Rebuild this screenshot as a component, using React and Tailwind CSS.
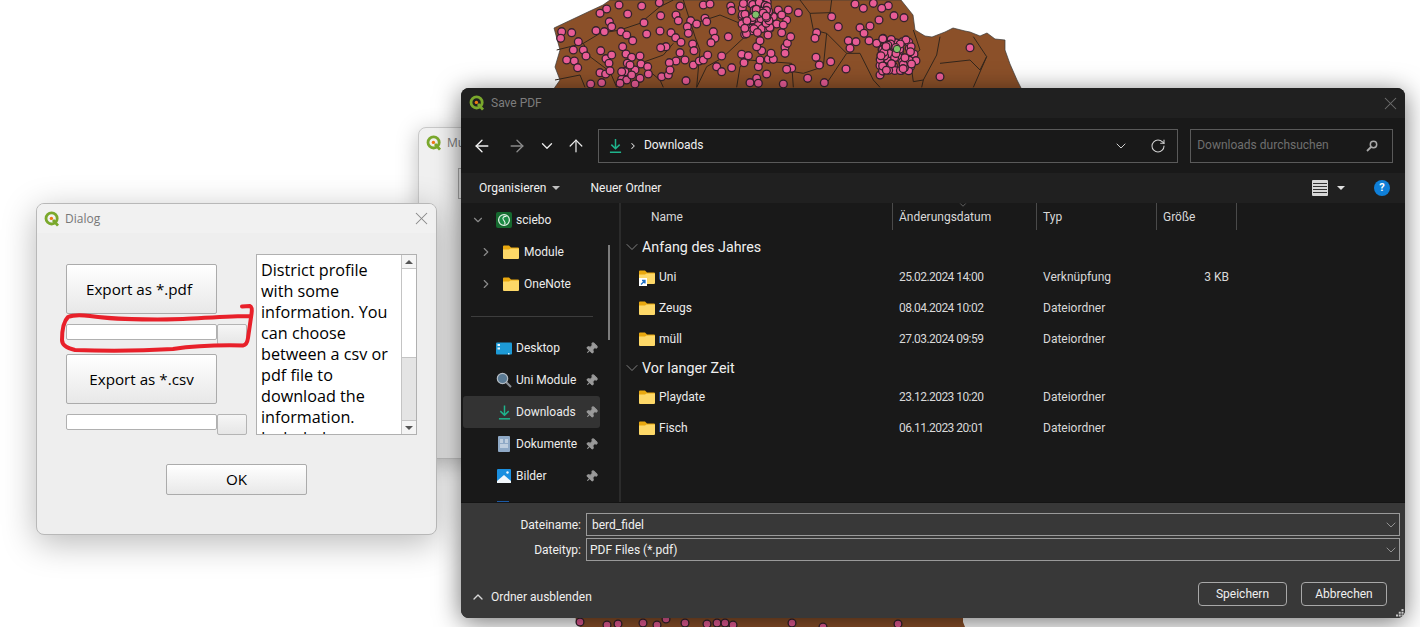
import React from "react";
import { ArrowLeft, ArrowRight, ArrowUp, ChevronDown, ChevronRight, ChevronUp, RotateCw, X, Pin } from "lucide-react";

const brownDots = [
  [65,95],[95,98],[62,115],[115,125],[100,150],[130,150],[138,168],[80,180],[103,183],[113,203],[182,152],[198,176],[207,190],[215,165],[180,218],[197,222],[210,212],[152,252],[185,248],[168,92],[193,95],[243,95],[260,105],[278,122],[248,140],[258,162],[275,172],[300,168],[303,192],[285,210],[323,200],[325,222],[300,235],[285,252],[245,238],[255,215],[262,190],[320,102],[360,93],[312,68],[263,42],[237,15],[200,27],[180,40],[208,65],[215,80],[362,47],[408,45],[415,62],[452,62],[470,72],[442,80],[445,100],[393,98],[407,113],[423,127],[378,140],[362,143],[458,132],[462,152],[420,158],[435,180],[408,183],[388,188],[365,230],[385,225],[390,210],[438,242],[460,195],[478,183],[490,180],[503,165],[545,168],[530,200],[545,215],[575,203],[612,188],[605,163],[625,167],[565,110],[520,95],[525,115],[513,128],[495,55],[500,65],[490,15],[510,12],[572,18],[575,32],[358,8],[305,18],[420,18],[655,200],[660,180],[685,178],[700,178],[693,160],[665,152],[650,140],[660,122],[680,222],[650,235],[630,248],[655,250],[730,252],[755,205],[740,208],[735,142],[735,160],[742,130],[752,110],[725,98],[830,98],[825,115],[828,172],[838,195],[872,185],[803,235],[853,248],[875,50],[895,80],[918,207],[925,122],[948,125],[930,145],[960,83],[990,78],[972,100],[987,122],[1010,130],[1017,60],[1062,47],[1092,53],[1045,17],[1025,25],[1000,10],[970,25],[945,12],[1290,143],[1200,230],[1122,162],[1128,182],[1020,225],[775,38],[745,30],[715,30],[710,72],[740,60],[270,195],[245,215],[260,240],[240,250],[275,225],[730,75],[700,50],[725,45],
];

const lines = [
  "130,130 180,100 240,90 300,70 360,20 400,0",
  "430,0 465,110 480,150 470,262",
  "465,70 540,45 600,70",
  "615,110 545,175 500,200 470,262",
  "300,190 370,165 400,130",
  "50,150 130,130 150,170 210,215",
  "45,240 120,225 135,262",
  "210,215 230,262",
  "300,190 360,240 370,262",
  "780,0 810,40 870,38 875,0",
  "810,40 820,90 860,100 920,160 860,250",
  "920,160 960,160 1000,240 1020,262",
  "860,100 850,200 790,220 760,215",
  "625,180 755,190 760,262",
  "630,180 600,200 590,262",
  "1120,90 1140,150 1110,175 1120,245 1150,240 1190,165 1200,110",
  "1200,190 1290,180 1320,210 1340,170 1300,110",
  "1340,170 1300,262",
  "1150,240 1145,262",
];

const bottomDots = [[580,622],[607,625],[618,624],[643,623],[657,625],[666,619],[685,623],[707,624],[717,623],[725,623],[733,625],[792,623],[823,627],[898,624]];

// small seeded generator so the dense clusters stay the same on every load
function cluster(seed, cx, cy, rx, ry, count) {
  let s = seed;
  const next = () => {
    s = (s * 16807) % 2147483647;
    return s / 2147483647;
  };
  return Array.from({ length: count }, () => [cx + (next() * 2 - 1) * rx, cy + (next() * 2 - 1) * ry]);
}

const clusterA = cluster(11, 648, 55, 42, 50, 60);
const clusterB = cluster(29, 1068, 165, 48, 50, 70);

function MapLayer() {
  const z = ([x, y]) => [540 + x / 3, y / 3];
  const all = [...brownDots, ...clusterA, ...clusterB].map(z);
  return (
    <svg className="absolute left-0 top-0" width="1420" height="627" viewBox="0 0 1420 627">
      <polygon
        fill="#8b5029"
        stroke="#3a3a3a"
        strokeWidth="0.7"
        points="554,28 590,11 603,5 610,0 901,0 913,15 915,30 925,36 932,37 945,32 953,28 965,31 970,32 980,36 987,33 995,39 1005,40 1005,50 1010,64 1017,80 1022,90 553,90 560,80 555,67 560,50"
      />
      {lines.map((l) => (
        <polyline
          key={l}
          fill="none"
          stroke="#33261c"
          strokeWidth="1"
          points={l
            .split(" ")
            .map((p) => {
              const [x, y] = p.split(",").map(Number);
              return `${540 + x / 3},${y / 3}`;
            })
            .join(" ")}
        />
      ))}
      {all.map(([x, y], i) => (
        <circle key={i} cx={x} cy={y} r="3.9" fill="#e85c96" stroke="#33222b" strokeWidth="1.3" />
      ))}
      <circle cx="755.7" cy="14.7" r="3.7" fill="#7fc06a" stroke="#33222b" />
      <circle cx="897" cy="49" r="3.7" fill="#7fc06a" stroke="#33222b" />
      <polygon fill="#8b5029" points="575,612 963,612 963,622 965,627 580,627 576,622" />
      {bottomDots.map(([x, y], i) => (
        <circle key={i} cx={x} cy={y} r="3.9" fill="#e85c96" stroke="#33222b" strokeWidth="1.3" />
      ))}
    </svg>
  );
}

function QgisIcon({ className }) {
  return (
    <svg className={className} viewBox="0 0 16 16">
      <circle cx="7.6" cy="7.4" r="5.6" fill="none" stroke="#7aa82c" strokeWidth="2.8" />
      <path d="M9 9l5 5.6" stroke="#7aa82c" strokeWidth="2.8" />
      <circle cx="7.4" cy="7.4" r="1.7" fill="#ee7913" />
    </svg>
  );
}

function Folder({ className = "w-4 h-[14px]" }) {
  return (
    <svg className={className} viewBox="0 0 16 14">
      <path d="M0 1.5a1 1 0 0 1 1-1h5l2 2h7a1 1 0 0 1 1 1V6H0z" fill="#e9a80f" />
      <path d="M0 4.5h6l1.5-1H16V13a1 1 0 0 1-1 1H1a1 1 0 0 1-1-1z" fill="#fdd868" />
    </svg>
  );
}

function ShortcutFolder() {
  return (
    <div className="relative">
      <Folder />
      <svg className="absolute left-0 top-[8px] w-[8px] h-[8px]" viewBox="0 0 8 8">
        <rect width="8" height="8" fill="#ffffff" />
        <path d="M2 6.5L5.5 3M3 2.5h3v3" fill="none" stroke="#1f6fc4" strokeWidth="1.3" />
      </svg>
    </div>
  );
}

function DownloadIcon({ className }) {
  return (
    <svg className={className} viewBox="0 0 14 16">
      <path d="M7 0.5v10M2.5 6.5L7 11l4.5-4.5" fill="none" stroke="#1fb48c" strokeWidth="1.6" />
      <path d="M1 14.8h12" stroke="#1fb48c" strokeWidth="1.6" />
    </svg>
  );
}

function ScieboIcon() {
  return (
    <svg className="w-4 h-4" viewBox="0 0 16 16">
      <rect width="16" height="16" rx="2" fill="#15692f" />
      <circle cx="8" cy="8" r="5.4" fill="#1c8a45" stroke="#e4f2e8" strokeWidth="1.2" />
      <path d="M10.5 4.5C7.5 4 6 6 7.5 8s2.5 2.5 1 4.5" fill="none" stroke="#e4f2e8" strokeWidth="1.1" />
    </svg>
  );
}

function DesktopIcon() {
  return (
    <svg className="w-4 h-[13px]" viewBox="0 0 16 13">
      <rect width="16" height="12" y="0.5" rx="1" fill="#1d9ad6" />
      <rect x="1.5" y="2" width="2.5" height="2" fill="#e8f6fc" />
      <rect x="1.5" y="5.5" width="2.5" height="2" fill="#e8f6fc" />
      <rect x="12" y="11" width="1.5" height="1.5" fill="#cceeff" />
    </svg>
  );
}

function LensIcon() {
  return (
    <svg className="w-4 h-4" viewBox="0 0 16 16">
      <path d="M9.5 9.5L15 15" stroke="#8a8f96" strokeWidth="2" />
      <circle cx="6.5" cy="6.5" r="5.2" fill="#5a7a94" stroke="#b4bcc4" strokeWidth="1.2" />
    </svg>
  );
}

function DocIcon() {
  return (
    <svg className="w-4 h-4" viewBox="0 0 16 16">
      <rect x="2" y="0" width="12" height="16" rx="1" fill="#8fa9c6" />
      <path d="M4 4h3M4 6h3M9 4h3M9 6h3M4 9h8M4 11h8" stroke="#eef3f8" strokeWidth="1" />
    </svg>
  );
}

function PictureIcon() {
  return (
    <svg className="w-4 h-4" viewBox="0 0 16 16">
      <rect x="1" y="1" width="14" height="14" rx="1" fill="#1a8fe0" />
      <path d="M1 13l7-6 7 6v2H1z" fill="#f2f7fb" />
      <circle cx="11.5" cy="4.5" r="1.2" fill="#f2f7fb" />
    </svg>
  );
}

function PinMark() {
  return <Pin className="w-[13px] h-[13px] text-[#9a9a9a] fill-[#9a9a9a] rotate-45" strokeWidth={2} />;
}

function Tri({ className }) {
  return <div className={`w-0 h-0 border-x-[4px] border-x-transparent border-t-[4px] ${className}`}></div>;
}

function TreeRow({ chevron, icon, label, pinned, selected, indent }) {
  return (
    <div className={`w-[137px] h-8 flex items-center mx-[2px] rounded-[3px] ${selected ? "bg-[#333333]" : ""}`}>
      <div className={`flex items-center shrink-0 ${indent ? "w-[40px] pl-[16px]" : "w-[33px] pl-[8px]"}`}>
        {chevron === "down" && <ChevronDown className="w-[14px] h-[14px] text-[#8a8a8a]" strokeWidth={2} />}
        {chevron === "right" && <ChevronRight className="w-[14px] h-[14px] text-[#8a8a8a]" strokeWidth={2} />}
      </div>
      <div className="w-[16px] shrink-0 flex justify-center">{icon}</div>
      <span className={`${indent ? "ml-[5px]" : "ml-[4px]"} text-[12px] text-[#ececec]`}>{label}</span>
      {pinned && (
        <div className="ml-auto mr-[1px] w-[14px]">
          <PinMark />
        </div>
      )}
    </div>
  );
}

function Sidebar() {
  return (
    <div className="relative w-[158px] shrink-0 overflow-hidden pt-px">
      <TreeRow chevron="down" icon={<ScieboIcon />} label="sciebo" />
      <TreeRow chevron="right" indent icon={<Folder />} label="Module" />
      <TreeRow chevron="right" indent icon={<Folder />} label="OneNote" />
      <div className="h-8 flex items-center pl-[10px] pr-[26px]">
        <div className="h-px w-full bg-[#3d3d3d]"></div>
      </div>
      <TreeRow icon={<DesktopIcon />} label="Desktop" pinned />
      <TreeRow icon={<LensIcon />} label="Uni Module" pinned />
      <TreeRow icon={<DownloadIcon className="w-[13px] h-[15px]" />} label="Downloads" pinned selected />
      <TreeRow icon={<DocIcon />} label="Dokumente" pinned />
      <TreeRow icon={<PictureIcon />} label="Bilder" pinned />
      <div className="pl-[36px] pt-[9px]">
        <div className="w-[12px] h-[12px] bg-[#1c5aa6]"></div>
      </div>
      <div className="absolute left-[147px] top-[42px] w-[2px] h-[95px] bg-[#7c7c7c]"></div>
    </div>
  );
}

function GroupHead({ label, h }) {
  return (
    <div className={`${h} flex items-center pl-[1px]`}>
      <ChevronDown className="w-[20px] h-[20px] text-[#8a8a8a]" strokeWidth={1.1} />
      <span className="text-[14.3px] text-[#f0f0f0] pt-[2px]">{label}</span>
    </div>
  );
}

function FileRow({ name, date, type, size, shortcut }) {
  return (
    <div className="h-[31px] flex items-center text-[12px] text-[#d8d8d8]">
      <div className="w-[278px] shrink-0 flex items-center pl-[18px] gap-[4px] text-[#ececec]">
        {shortcut ? <ShortcutFolder /> : <Folder />}
        <span>{name}</span>
      </div>
      <div className="w-[144px] shrink-0 tracking-[-0.55px]">{date}</div>
      <div className="w-[100px] shrink-0">{type}</div>
      <div className="w-[86px] shrink-0 text-right">{size}</div>
    </div>
  );
}

function SaveDialog() {
  return (
    <div className="absolute left-[461px] top-[88px] w-[944px] h-[530px] rounded-lg overflow-hidden flex flex-col bg-[#191919] shadow-[0_4px_26px_rgba(0,0,0,0.55)] font-[Roboto,sans-serif]">
      <div className="h-[30px] shrink-0 bg-[#202020] flex items-center pl-[8px] pr-[4px]">
        <QgisIcon className="w-4 h-4" />
        <span className="ml-[6px] text-[12px] text-[#7d7d7d]">Save PDF</span>
        <X className="ml-auto w-[21px] h-[21px] text-[#6e6e6e]" strokeWidth={1.2} />
      </div>

      <div className="h-[55px] shrink-0 bg-[#191919] flex items-center pl-[11px] pr-[12px]">
        <ArrowLeft className="w-5 h-5 text-[#f0f0f0]" strokeWidth={1.6} />
        <ArrowRight className="ml-[15px] w-5 h-5 text-[#8a8a8a]" strokeWidth={1.6} />
        <ChevronDown className="ml-[11px] w-[18px] h-[18px] text-[#e8e8e8]" strokeWidth={1.8} />
        <ArrowUp className="ml-[10px] w-5 h-5 text-[#e8e8e8]" strokeWidth={1.5} />
        <div className="ml-[12px] w-[581px] h-[34px] border border-[#5a5a5a] flex items-center pl-[10px] pr-[11px]">
          <DownloadIcon className="w-[13px] h-[16px]" />
          <ChevronRight className="ml-[6px] w-[10px] h-[10px] text-[#e0e0e0]" strokeWidth={2.5} />
          <span className="ml-[6px] text-[12px] text-[#f0f0f0] pb-px">Downloads</span>
          <ChevronDown className="ml-auto w-4 h-4 text-[#d0d0d0]" strokeWidth={1.5} />
          <RotateCw className="ml-[21px] w-4 h-4 text-[#d0d0d0]" strokeWidth={1.6} />
        </div>
        <div className="ml-[12px] w-[203px] h-[34px] border border-[#5a5a5a] flex items-center pl-[6px] pr-[14px]">
          <span className="text-[12px] text-[#6f6f6f] pb-px">Downloads durchsuchen</span>
          <svg className="ml-auto w-3 h-3" viewBox="0 0 12 12">
            <circle cx="7.5" cy="4.5" r="3.2" fill="none" stroke="#a8a8a8" strokeWidth="1.5" />
            <path d="M5 7L1 11" stroke="#a8a8a8" strokeWidth="1.8" />
          </svg>
        </div>
      </div>

      <div className="h-[30px] shrink-0 bg-[#202020] flex items-center pl-[18px] pr-[15px] text-[12px] text-[#f0f0f0]">
        <span>Organisieren</span>
        <Tri className="ml-[6px] border-t-[#c0c0c0]" />
        <span className="ml-[30px]">Neuer Ordner</span>
        <div className="ml-auto w-4 h-4 rounded-[1px] bg-[#d8d8d8] flex flex-col justify-center gap-[2px] px-[1px]">
          <div className="h-px bg-[#333333]"></div>
          <div className="h-px bg-[#333333]"></div>
          <div className="h-px bg-[#333333]"></div>
          <div className="h-px bg-[#333333]"></div>
        </div>
        <Tri className="ml-[9px] border-t-[#e0e0e0]" />
        <div className="ml-[29px] w-4 h-4 rounded-full bg-[#0f7fd8] flex items-center justify-center text-[11px] font-bold text-white">?</div>
      </div>

      <div className="flex-1 min-h-0 flex bg-[#191919]">
        <Sidebar />
        <div className="w-[2px] shrink-0 bg-[#2b2b2b]"></div>
        <div className="flex-1 min-w-0 overflow-hidden">
          <div className="relative h-[27px] flex items-center text-[12px] text-[#d8d8d8]">
            <div className="w-[272px] h-full shrink-0 flex items-center pl-[30px] border-r border-[#4a4a4a]">Name</div>
            <div className="w-[144px] h-full shrink-0 flex items-center pl-[6px] border-r border-[#4a4a4a]">Änderungsdatum</div>
            <div className="w-[120px] h-full shrink-0 flex items-center pl-[6px] border-r border-[#4a4a4a]">Typ</div>
            <div className="w-[80px] h-full shrink-0 flex items-center pl-[6px] border-r border-[#4a4a4a]">Größe</div>
            <ChevronDown className="absolute left-[337px] -top-[3px] w-[10px] h-[10px] text-[#8a8a8a]" strokeWidth={1.5} />
          </div>
          <div className="pt-[3px]">
            <GroupHead label="Anfang des Jahres" h="h-[28px]" />
            <FileRow shortcut name="Uni" date="25.02.2024 14:00" type="Verknüpfung" size="3 KB" />
            <FileRow name="Zeugs" date="08.04.2024 10:02" type="Dateiordner" />
            <FileRow name="müll" date="27.03.2024 09:59" type="Dateiordner" />
            <GroupHead label="Vor langer Zeit" h="h-[27px]" />
            <FileRow name="Playdate" date="23.12.2023 10:20" type="Dateiordner" />
            <FileRow name="Fisch" date="06.11.2023 20:01" type="Dateiordner" />
          </div>
        </div>
      </div>

      <div className="relative h-[116px] shrink-0 bg-[#383838] border-t border-[#141414] pt-[10px] text-[12px] text-[#f0f0f0]">
        <div className="flex items-center h-[23px] mb-[2px]">
          <div className="w-[120px] text-right">Dateiname:</div>
          <div className="ml-[5px] w-[814px] h-[23px] border border-[#9a9a9a] flex items-center pl-[5px]">
            <span>berd_fidel</span>
            <ChevronDown className="ml-auto w-4 h-4 text-[#a0a0a0]" strokeWidth={1.3} />
          </div>
        </div>
        <div className="flex items-center h-[23px]">
          <div className="w-[120px] text-right">Dateityp:</div>
          <div className="ml-[5px] w-[814px] h-[23px] border border-[#9a9a9a] flex items-center pl-[3px]">
            <span>PDF Files (*.pdf)</span>
            <ChevronDown className="ml-auto w-4 h-4 text-[#a0a0a0]" strokeWidth={1.3} />
          </div>
        </div>
        <div className="flex items-center pl-[9px] pr-[18px] mt-[21px]">
          <ChevronUp className="w-4 h-4 text-[#d8d8d8] mt-[6px]" strokeWidth={2} />
          <span className="ml-[5px] mt-[6px]">Ordner ausblenden</span>
          <div className="ml-auto w-[89px] h-[24px] rounded-[4px] border border-[#a8a8a8] flex items-center justify-center">Speichern</div>
          <div className="ml-[14px] w-[86px] h-[24px] rounded-[4px] border border-[#a8a8a8] flex items-center justify-center">Abbrechen</div>
        </div>
        <svg className="absolute right-[1px] bottom-[1px] w-[8px] h-[8px]" viewBox="0 0 8 8" fill="#c8c8c8">
          <rect x="5.5" y="0" width="2" height="2" />
          <rect x="2.75" y="2.75" width="2" height="2" />
          <rect x="5.5" y="2.75" width="2" height="2" />
          <rect x="0" y="5.5" width="2" height="2" />
          <rect x="2.75" y="5.5" width="2" height="2" />
          <rect x="5.5" y="5.5" width="2" height="2" />
        </svg>
      </div>
    </div>
  );
}

function RearWindow() {
  return (
    <div className="absolute left-[418px] top-[127px] w-[300px] h-[332px] rounded-t-lg border border-[#c8c8c8] bg-[#f0f0f0] shadow-[0_4px_22px_rgba(0,0,0,0.25)] font-['Open_Sans',sans-serif]">
      <div className="h-[30px] flex items-center pl-[7px]">
        <QgisIcon className="w-4 h-4" />
        <span className="ml-[5px] text-[12px] text-[#777777]">Mu</span>
      </div>
      <div className="ml-[39px] mt-[10px] w-[6px] h-[31px] border border-[#aaaaaa]"></div>
    </div>
  );
}

function QtButton({ className, children }) {
  return (
    <div className={`rounded-[2px] border border-[#ababab] bg-gradient-to-b from-white to-[#e8e8e8] flex items-center justify-center text-black ${className}`}>
      {children}
    </div>
  );
}

function ProgressRow() {
  return (
    <div className="flex items-start">
      <div className="w-[151px] h-[16px] rounded-[2px] border border-[#b0b0b0] bg-white"></div>
      <div className="w-[30px] h-[21px] rounded-[2px] border border-[#b4b4b4] bg-gradient-to-b from-[#f6f6f6] to-[#e6e6e6]"></div>
    </div>
  );
}

function QgisDialog() {
  return (
    <div className="absolute left-[36px] top-[203px] w-[401px] h-[332px] rounded-[8px] border border-[#b8b8b8] bg-[#eeeeee] shadow-[0_8px_34px_rgba(0,0,0,0.28)] font-['Open_Sans',sans-serif] overflow-hidden">
      <div className="h-[29px] bg-[#f1f1f1] flex items-center pl-[7px] pr-[4px]">
        <QgisIcon className="w-4 h-4" />
        <span className="ml-[5px] text-[12px] text-[#777777]">Dialog</span>
        <X className="ml-auto w-[21px] h-[21px] text-[#888888]" strokeWidth={1.2} />
      </div>
      <div className="flex pl-[29px] pt-[21px]">
        <div className="w-[181px] pt-[10px] shrink-0">
          <QtButton className="w-[151px] h-[50px] text-[15.2px] pr-[5px]">Export as *.pdf</QtButton>
          <div className="mt-[10px] mb-[9px]">
            <ProgressRow />
          </div>
          <QtButton className="w-[151px] h-[50px] text-[15.2px]">Export as *.csv</QtButton>
          <div className="mt-[10px]">
            <ProgressRow />
          </div>
        </div>
        <div className="ml-[9px] w-[161px] h-[181px] border border-[#b0b0b0] bg-white flex overflow-hidden">
          <div className="flex-1 min-w-0 pl-[4px] pr-[2px] pt-[5px] text-[16.2px] leading-[21px] text-black">
            District profile with some information. You can choose between a csv or pdf file to download the information. Included
          </div>
          <div className="w-[15px] shrink-0 border-l border-[#c4c4c4] flex flex-col">
            <div className="h-[14px] border-b border-[#c4c4c4] flex items-center justify-center bg-[#f4f4f4]">
              <div className="w-0 h-0 border-x-[4px] border-x-transparent border-b-[4px] border-b-[#555555]"></div>
            </div>
            <div className="h-[89px] bg-white border-b border-[#c4c4c4]"></div>
            <div className="flex-1 bg-[#e4e4e4]"></div>
            <div className="h-[14px] border-t border-[#c4c4c4] flex items-center justify-center bg-[#f4f4f4]">
              <Tri className="border-t-[#555555]" />
            </div>
          </div>
        </div>
      </div>
      <div className="flex justify-center mt-[29px]">
        <QtButton className="w-[141px] h-[31px] text-[15.2px]">OK</QtButton>
      </div>
    </div>
  );
}

function Scribble() {
  return (
    <svg className="absolute left-0 top-0 pointer-events-none" width="1420" height="627" viewBox="0 0 1420 627">
      <path
        d="M242 306.5L250 306Q252.5 307 251.5 314L248 338Q247 345 243 345.5C220 345 200 345 173 349C140 351 100 351 75 350Q62 347 62 340C62 330 63 322 68 317Q75 314 90 316C110 319 150 320 183 319C205 318 230 316 251 316"
        fill="none"
        stroke="#e8202a"
        strokeWidth="4"
        strokeLinecap="round"
        strokeLinejoin="round"
      />
    </svg>
  );
}

export default function App() {
  return (
    <div className="relative w-[1420px] h-[627px] overflow-hidden bg-white">
      <MapLayer />
      <RearWindow />
      <QgisDialog />
      <Scribble />
      <SaveDialog />
    </div>
  );
}
